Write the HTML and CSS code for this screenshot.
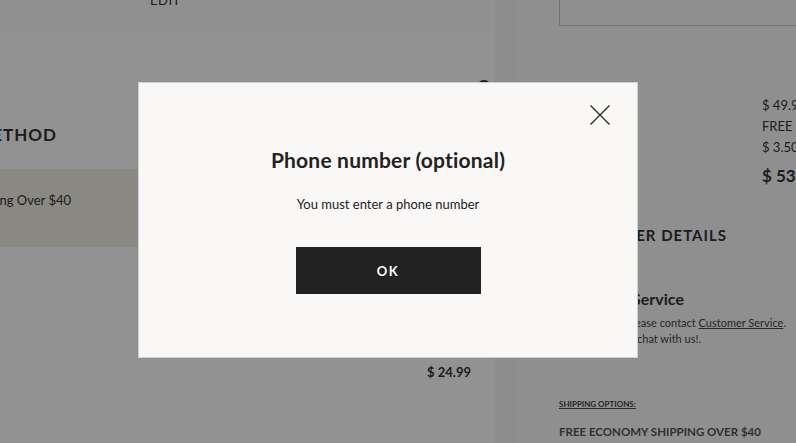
FILE: index.html
```html
<!DOCTYPE html>
<html lang="en">
<head>
<meta charset="utf-8">
<title>Checkout</title>
<link rel="stylesheet" href="styles.css">
</head>
<body>
<div class="page">
  <section class="left">
    <div class="top-band"><span class="edit">EDIT</span></div>
    <div class="help-row"><span class="help-icon"></span></div>
    <div class="cut-left method-cut"><h2 class="section-title">SHIPPING METHOD</h2></div>
    <div class="option selected">
      <div class="cut-left option-cut"><span>Free Shipping Over $40</span></div>
    </div>
    <div class="price-row">$ 24.99</div>
  </section>
  <div class="gutter"></div>
  <aside class="right">
    <div class="frame"></div>
    <div class="summary">
      <div class="sum-row"><span class="sum-label">Order value</span><span class="sum-val">$ 49.99</span></div>
      <div class="sum-row"><span class="sum-label">Shipping</span><span class="sum-val">FREE</span></div>
      <div class="sum-row"><span class="sum-label">Sales tax</span><span class="sum-val">$ 3.50</span></div>
      <div class="sum-row total"><span class="sum-label">Total</span><span class="sum-val">$ 53.49</span></div>
    </div>
    <div class="cut-left details-cut"><h2 class="section-title small">CUSTOMER DETAILS</h2></div>
    <h3 class="service-title">Customer Service</h3>
    <div class="cut-left line1"><span>If you need help, please contact <a href="#" class="link">Customer Service</a>.</span></div>
    <div class="cut-left line2"><span>Or chat with us!.</span></div>
    <a href="#" class="ship-opts">SHIPPING OPTIONS:</a>
    <p class="ship-free">FREE ECONOMY SHIPPING OVER $40</p>
  </aside>
</div>

<div class="overlay">
  <div class="modal" role="dialog" aria-labelledby="mtitle">
    <div class="modal-head">
      <button class="close" aria-label="Close">
        <svg width="20" height="20" viewBox="0 0 20 20"><path d="M0.5 0.5 L19.5 19.5 M19.5 0.5 L0.5 19.5" stroke="#222" stroke-width="1.2" fill="none"/></svg>
      </button>
    </div>
    <h1 class="modal-title" id="mtitle">Phone number (optional)</h1>
    <p class="modal-text">You must enter a phone number</p>
    <button class="ok">OK</button>
  </div>
</div>
</body>
</html>
```

FILE: styles.css
```css
* { box-sizing: border-box; }
html, body { margin: 0; padding: 0; }
body {
  width: 796px;
  height: 443px;
  overflow: hidden;
  font-family: "Lato", "Open Sans", sans-serif;
  color: #333;
  background: #f6f6f6;
}
h1, h2, h3, p { margin: 0; }

.page { display: flex; height: 443px; }

.left { width: 495px; background: #fff; display: flex; flex-direction: column; }
.top-band { height: 32px; background: #fbfbfb; padding-left: 150px; }
.edit { display: block; margin-top: -8px; font-size: 13px; line-height: 16px; letter-spacing: 0.5px; }
.help-row { display: flex; justify-content: flex-end; padding-right: 4px; margin-top: 48px; height: 0; }
.help-icon { width: 14px; height: 14px; border-radius: 50%; background: #333; display: block; }

.cut-left { display: flex; justify-content: flex-end; white-space: nowrap; }
.method-cut { width: 57px; margin-top: 45px; }
.section-title { font-size: 17px; line-height: 20px; font-weight: 700; letter-spacing: 1px; }
.section-title.small { font-size: 15px; }

.option { height: 78px; margin-top: 24px; display: flex; align-items: flex-start; padding-top: 23px; }
.option.selected { background: #f2eee3; }
.option-cut { width: 71px; font-size: 13px; line-height: 16px; }

.price-row { margin-top: 117px; padding-right: 24px; text-align: right; font-size: 13px; line-height: 16px; font-weight: 700; }

.gutter { width: 23px; background: #f6f6f6; }

.right { flex: 1; background: #fafafa; padding-left: 41px; display: flex; flex-direction: column; overflow: hidden; }
.frame { width: 300px; height: 26px; border: 1px solid #c8c8c8; border-top: none; flex: none; }
.summary { margin-top: 69px; }
.sum-row { display: flex; font-size: 13px; line-height: 21px; white-space: nowrap; }
.sum-label { width: 203px; flex: none; }
.sum-val { flex: none; }
.sum-row.total { margin-top: 6px; font-size: 17px; line-height: 24px; font-weight: 700; }
.details-cut { width: 168px; margin-top: 37px; }
.service-title { margin-top: 43px; font-size: 16px; line-height: 22px; font-weight: 700; }
.line1, .line2 { font-size: 11px; line-height: 16px; color: #444; }
.line1 { width: 227px; margin-top: 5px; }
.line2 { width: 142px; }
.link { color: #444; text-decoration: underline; }
.ship-opts { margin-top: 51px; font-size: 8px; line-height: 12px; color: #444; font-weight: 700; text-decoration: underline; }
.ship-free { margin-top: 14px; font-size: 11.5px; line-height: 16px; font-weight: 700; color: #555; white-space: nowrap; }

.overlay { position: fixed; inset: 0; background: rgba(0, 0, 0, 0.427); }
.modal {
  position: absolute;
  left: 138px;
  top: 82px;
  width: 500px;
  height: 276px;
  background: #f9f8f6;
  border: 1px solid #cfcfcf;
  display: flex;
  flex-direction: column;
  align-items: center;
}
.modal-head { align-self: stretch; display: flex; justify-content: flex-end; padding: 22px 27px 0 0; height: 42px; }
.close { width: 20px; height: 20px; padding: 0; border: 0; background: none; display: block; }
.close svg { display: block; }
.modal-title { margin-top: 22px; font-size: 21px; line-height: 26px; font-weight: 700; letter-spacing: 0.2px; color: #222; }
.modal-text { margin-top: 23px; font-size: 13px; line-height: 16px; color: #222; }
.ok {
  margin-top: 35px;
  width: 185px;
  height: 47px;
  border: 0;
  background: #222;
  color: #fff;
  font-family: inherit;
  font-size: 13px;
  font-weight: 700;
  letter-spacing: 1.5px;
}
```
